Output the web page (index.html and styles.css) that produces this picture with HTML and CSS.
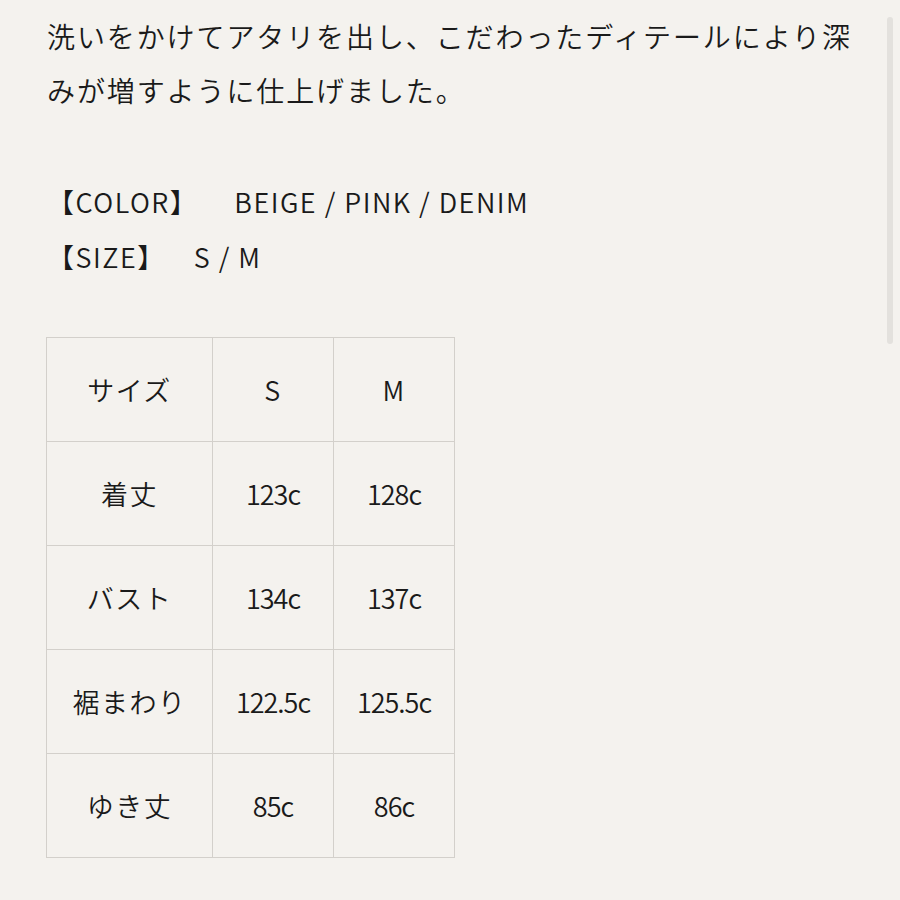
FILE: index.html
```html
<!DOCTYPE html>
<html lang="ja">
<head>
<meta charset="utf-8">
<title>商品詳細</title>
<link rel="stylesheet" href="styles.css">
</head>
<body>
<div class="page">
  <p class="lead">洗いをかけてアタリを出し、こだわったディテールにより深みが増すように仕上げました。</p>
  <div class="specs">
    <div class="spec"><span class="label">【COLOR】</span><span class="value value-color">BEIGE / PINK / DENIM</span></div>
    <div class="spec"><span class="label">【SIZE】</span><span class="value value-size">S / M</span></div>
  </div>
  <table class="size-table">
    <tr><th>サイズ</th><td>S</td><td>M</td></tr>
    <tr><th>着丈</th><td class="num">123c</td><td class="num">128c</td></tr>
    <tr><th>バスト</th><td class="num">134c</td><td class="num">137c</td></tr>
    <tr><th>裾まわり</th><td class="num">122.5c</td><td class="num">125.5c</td></tr>
    <tr><th>ゆき丈</th><td class="num">85c</td><td class="num">86c</td></tr>
  </table>
</div>
<div class="scrollbar"></div>
</body>
</html>
```
FILE: styles.css
```css
html, body {
  margin: 0;
  padding: 0;
  background: #f4f2ee;
}
body {
  width: 900px;
  height: 900px;
  overflow: hidden;
  color: #1a1a1a;
  font-family: "Noto Sans CJK JP", "Noto Sans", sans-serif;
  font-weight: 350;
}
.page {
  padding: 9px 40px 0 47px;
}
.lead {
  margin: 0;
  font-size: 28px;
  line-height: 54px;
  letter-spacing: 1.9px;
  width: 820px;
}
.specs {
  margin-top: 57px;
}
.spec {
  font-size: 27px;
  line-height: 55px;
  white-space: nowrap;
  letter-spacing: 1.5px;
}
.label {
  display: inline-block;
}
.value-color {
  margin-left: 36px;
  letter-spacing: 1.5px;
}
.value-size {
  margin-left: 28px;
  letter-spacing: 1.5px;
}
.size-table {
  margin-top: 53px;
  margin-left: -1px;
  border-collapse: collapse;
}
.size-table th,
.size-table td {
  border: 1px solid #d3d0cb;
  height: 103px;
  padding: 0;
  text-align: center;
  vertical-align: middle;
  font-size: 27px;
  font-weight: 350;
  letter-spacing: 1.5px;
}
.size-table th {
  width: 165px;
}
.size-table td {
  width: 120px;
}
.size-table td.num {
  letter-spacing: -1px;
}
.scrollbar {
  position: fixed;
  right: 7px;
  top: 17px;
  width: 6px;
  height: 327px;
  background: #e3e1dd;
  border-radius: 3px;
}
```
